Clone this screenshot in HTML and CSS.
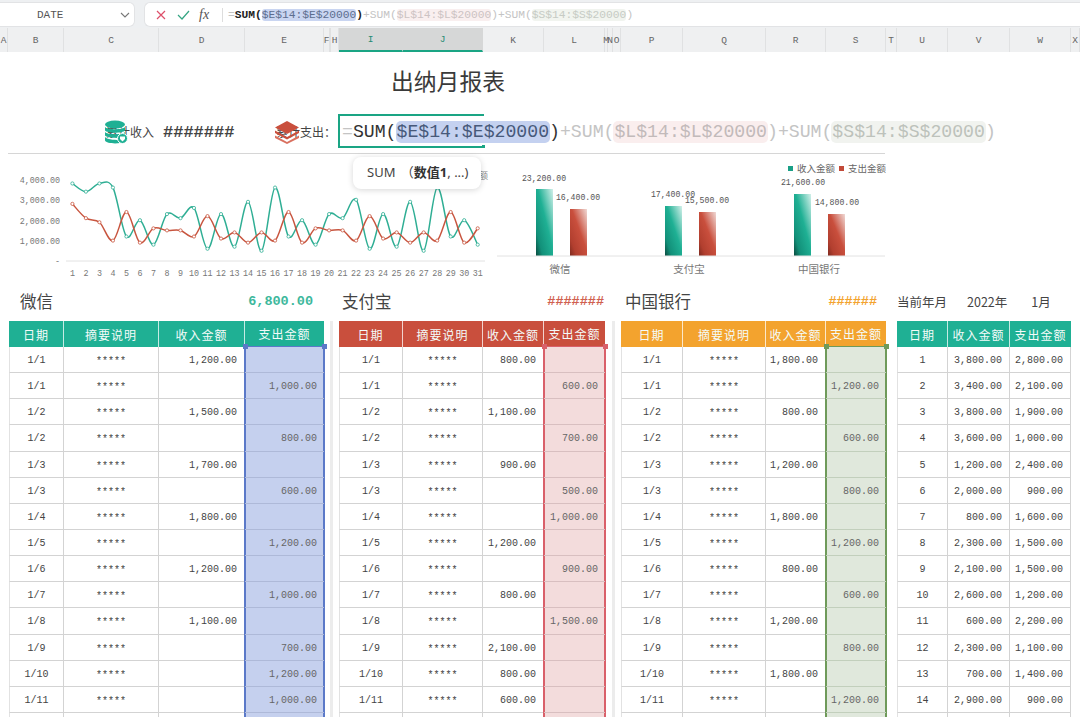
FILE: index.html
```html
<!DOCTYPE html>
<html lang="zh">
<head>
<meta charset="utf-8">
<title>出纳月报表</title>
<link rel="stylesheet" href="styles.css">
</head>
<body>
<header class="toolbar">
  <div class="namebox"><span class="namebox-text">DATE</span>
    <svg class="chevron" viewBox="0 0 10 6" width="10" height="6"><polyline points="1,1 5,5 9,1"/></svg>
  </div>
  <div class="formula">
    <svg class="fx-icon" viewBox="0 0 12 12" width="12" height="12"><path class="cancel" d="M2 2 L10 10 M10 2 L2 10"/></svg>
    <svg class="fx-icon" viewBox="0 0 14 12" width="14" height="12"><polyline class="accept" points="2,6 6,10 13,2"/></svg>
    <span class="fx-label">fx</span>
    <span class="fx-sep"></span>
    <span class="formula-text"><span class="faint">=</span><b>SUM(</b><span class="range-blue">$E$14:$E$20000</span><b>)</b><span class="ghost">+SUM(<span class="range-pink">$L$14:$L$20000</span>)+SUM(<span class="range-green">$S$14:$S$20000</span>)</span></span>
  </div>
</header>

<div class="colhead">
  <span>A</span><span>B</span><span>C</span><span>D</span><span>E</span><span>F</span><span></span><span>H</span>
  <span class="on">I</span><span class="on">J</span><span>K</span><span>L</span><span>M</span><span>N</span><span>O</span>
  <span>P</span><span>Q</span><span>R</span><span>S</span><span>T</span><span>U</span><span>V</span><span>W</span><span>X</span>
</div>

<main class="sheet">
  <h1 class="title">出纳月报表</h1>

  <section class="summary">
    <div class="stat-label stat-income">累计收入
      <svg class="stat-icon" viewBox="0 0 24 24" width="24" height="24">
        <ellipse cx="11" cy="4.5" rx="10" ry="4" fill="#1fb094"/>
        <path d="M1 7 C3 10 19 10 21 7 V10.5 C19 13.5 3 13.5 1 10.5 Z" fill="#1fb094"/>
        <path d="M1 12 C3 15 19 15 21 12 V15.5 C19 18.5 3 18.5 1 15.5 Z" fill="#1fb094"/>
        <path d="M1 17 C3 20 14 20 16 20 V23 C10 24 2 23 1 20.5 Z" fill="#1fb094"/>
        <circle cx="18.5" cy="18.5" r="5" fill="#1fb094" stroke="#fff"/>
        <path d="M16 16.5 H21 V19 L18.5 21.5 L16 19 Z" fill="#fff"/>
      </svg>
    </div>
    <span class="stat-hash">#######</span>
    <div class="stat-label stat-expense">累计支出：
      <svg class="stat-icon" viewBox="0 0 26 24" width="26" height="24">
        <path d="M13 1 L25 7.5 L13 14 L1 7.5 Z" fill="#c94f3d"/>
        <path d="M1 10.5 L13 17 L25 10.5 V13 L13 19.5 L1 13 Z" fill="#c94f3d"/>
        <path d="M1 15.5 L13 22 L25 15.5 V18 L13 24 L1 18 Z" fill="#d9705f"/>
      </svg>
    </div>
    <div class="editor">
      <span class="faint">=</span>SUM(<span class="chip chip-blue">$E$14:$E$20000</span>)<span class="ghost">+SUM(<span class="chip chip-pink">$L$14:$L$20000</span>)+SUM(<span class="chip chip-green">$S$14:$S$20000</span>)</span>
      <i class="editor-handle"></i>
    </div>
    <div class="tip">SUM <span class="tip-args">（<b>数值1</b>, ...)</span></div>
  </section>

  <section class="charts">
    <svg id="lineChart" class="chart" viewBox="0 154 497 136" width="497" height="136">
      <g class="axis-y">
        <text x="60" y="183">4,000.00</text>
        <text x="60" y="203">3,000.00</text>
        <text x="60" y="224">2,000.00</text>
        <text x="60" y="244">1,000.00</text>
        <text x="60" y="264">-</text>
      </g>
      <line class="axis-line" x1="66" y1="261" x2="485" y2="261"/>
      <text class="chart-legend" x="479" y="179">额</text>
    </svg>
    <svg class="chart" viewBox="497 154 389 136" width="389" height="136">
      <defs>
        <linearGradient id="gTeal" x1="1" y1="0" x2="0" y2="1">
          <stop offset="0" stop-color="#d3f0ea"/><stop offset=".45" stop-color="#1fb094"/><stop offset=".8" stop-color="#129079"/><stop offset="1" stop-color="#0a4a3e"/>
        </linearGradient>
        <linearGradient id="gRed" x1="1" y1="0" x2="0" y2="1">
          <stop offset="0" stop-color="#f0dad6"/><stop offset=".45" stop-color="#c94f3d"/><stop offset=".8" stop-color="#b23f2f"/><stop offset="1" stop-color="#7d2a1f"/>
        </linearGradient>
      </defs>
      <rect class="bar-teal" x="536" y="189" width="17" height="67"/>
      <rect class="bar-red" x="570" y="209" width="17" height="47"/>
      <rect class="bar-teal" x="665" y="206" width="17" height="50"/>
      <rect class="bar-red" x="699" y="212" width="17" height="44"/>
      <rect class="bar-teal" x="794" y="194" width="17" height="62"/>
      <rect class="bar-red" x="828" y="214" width="17" height="42"/>
      <line class="axis-line" x1="497" y1="256" x2="885" y2="256"/>
      <g class="bar-value">
        <text x="544" y="181">23,200.00</text>
        <text x="578" y="200">16,400.00</text>
        <text x="673" y="197">17,400.00</text>
        <text x="707" y="203">15,500.00</text>
        <text x="803" y="185">21,600.00</text>
        <text x="837" y="205">14,800.00</text>
      </g>
      <g class="bar-cat">
        <text x="560" y="273">微信</text>
        <text x="689" y="273">支付宝</text>
        <text x="819" y="273">中国银行</text>
      </g>
      <rect x="788" y="166" width="5" height="5" fill="#1a9f86"/>
      <text class="bar-legend" x="797" y="172">收入金额</text>
      <rect x="839" y="166" width="5" height="5" fill="#c24a39"/>
      <text class="bar-legend" x="848" y="172">支出金额</text>
    </svg>
  </section>

  <section class="books">
    <div class="book-head head-wechat"><span class="book-name">微信</span><span class="book-total total-teal">6,800.00</span></div>
    <div></div>
    <div class="book-head head-alipay"><span class="book-name">支付宝</span><span class="book-hash hash-red">#######</span></div>
    <div></div>
    <div class="book-head head-boc"><span class="book-name">中国银行</span><span class="book-hash hash-orange">######</span></div>
    <div></div>
    <div class="period"><span>当前年月</span><span class="period-year">2022年</span><span class="period-month">1月</span></div>

    <table class="ledger wechat">
      <colgroup><col><col><col><col></colgroup>
      <thead><tr><th>日期</th><th>摘要说明</th><th>收入金额</th><th class="hl">支出金额<i class="grip grip-l"></i><i class="grip grip-r"></i></th></tr></thead>
      <tbody>
        <tr><td>1/1</td><td class="memo">*****</td><td class="num">1,200.00</td><td class="num hl"></td></tr>
        <tr><td>1/1</td><td class="memo">*****</td><td class="num"></td><td class="num hl">1,000.00</td></tr>
        <tr><td>1/2</td><td class="memo">*****</td><td class="num">1,500.00</td><td class="num hl"></td></tr>
        <tr><td>1/2</td><td class="memo">*****</td><td class="num"></td><td class="num hl">800.00</td></tr>
        <tr><td>1/3</td><td class="memo">*****</td><td class="num">1,700.00</td><td class="num hl"></td></tr>
        <tr><td>1/3</td><td class="memo">*****</td><td class="num"></td><td class="num hl">600.00</td></tr>
        <tr><td>1/4</td><td class="memo">*****</td><td class="num">1,800.00</td><td class="num hl"></td></tr>
        <tr><td>1/5</td><td class="memo">*****</td><td class="num"></td><td class="num hl">1,200.00</td></tr>
        <tr><td>1/6</td><td class="memo">*****</td><td class="num">1,200.00</td><td class="num hl"></td></tr>
        <tr><td>1/7</td><td class="memo">*****</td><td class="num"></td><td class="num hl">1,000.00</td></tr>
        <tr><td>1/8</td><td class="memo">*****</td><td class="num">1,100.00</td><td class="num hl"></td></tr>
        <tr><td>1/9</td><td class="memo">*****</td><td class="num"></td><td class="num hl">700.00</td></tr>
        <tr><td>1/10</td><td class="memo">*****</td><td class="num"></td><td class="num hl">1,200.00</td></tr>
        <tr><td>1/11</td><td class="memo">*****</td><td class="num"></td><td class="num hl">1,000.00</td></tr>
        <tr><td></td><td></td><td></td><td class="hl"></td></tr>
      </tbody>
    </table>
    <div class="gutter"></div>
    <table class="ledger alipay">
      <colgroup><col><col><col><col></colgroup>
      <thead><tr><th>日期</th><th>摘要说明</th><th>收入金额</th><th class="hl">支出金额<i class="grip grip-l"></i><i class="grip grip-r"></i></th></tr></thead>
      <tbody>
        <tr><td>1/1</td><td class="memo">*****</td><td class="num">800.00</td><td class="num hl"></td></tr>
        <tr><td>1/1</td><td class="memo">*****</td><td class="num"></td><td class="num hl">600.00</td></tr>
        <tr><td>1/2</td><td class="memo">*****</td><td class="num">1,100.00</td><td class="num hl"></td></tr>
        <tr><td>1/2</td><td class="memo">*****</td><td class="num"></td><td class="num hl">700.00</td></tr>
        <tr><td>1/3</td><td class="memo">*****</td><td class="num">900.00</td><td class="num hl"></td></tr>
        <tr><td>1/3</td><td class="memo">*****</td><td class="num"></td><td class="num hl">500.00</td></tr>
        <tr><td>1/4</td><td class="memo">*****</td><td class="num"></td><td class="num hl">1,000.00</td></tr>
        <tr><td>1/5</td><td class="memo">*****</td><td class="num">1,200.00</td><td class="num hl"></td></tr>
        <tr><td>1/6</td><td class="memo">*****</td><td class="num"></td><td class="num hl">900.00</td></tr>
        <tr><td>1/7</td><td class="memo">*****</td><td class="num">800.00</td><td class="num hl"></td></tr>
        <tr><td>1/8</td><td class="memo">*****</td><td class="num"></td><td class="num hl">1,500.00</td></tr>
        <tr><td>1/9</td><td class="memo">*****</td><td class="num">2,100.00</td><td class="num hl"></td></tr>
        <tr><td>1/10</td><td class="memo">*****</td><td class="num">800.00</td><td class="num hl"></td></tr>
        <tr><td>1/11</td><td class="memo">*****</td><td class="num">600.00</td><td class="num hl"></td></tr>
        <tr><td></td><td></td><td></td><td class="hl"></td></tr>
      </tbody>
    </table>
    <div class="gutter"></div>
    <table class="ledger boc">
      <colgroup><col><col><col><col></colgroup>
      <thead><tr><th>日期</th><th>摘要说明</th><th>收入金额</th><th class="hl">支出金额<i class="grip grip-l"></i><i class="grip grip-r"></i></th></tr></thead>
      <tbody>
        <tr><td>1/1</td><td class="memo">*****</td><td class="num">1,800.00</td><td class="num hl"></td></tr>
        <tr><td>1/1</td><td class="memo">*****</td><td class="num"></td><td class="num hl">1,200.00</td></tr>
        <tr><td>1/2</td><td class="memo">*****</td><td class="num">800.00</td><td class="num hl"></td></tr>
        <tr><td>1/2</td><td class="memo">*****</td><td class="num"></td><td class="num hl">600.00</td></tr>
        <tr><td>1/3</td><td class="memo">*****</td><td class="num">1,200.00</td><td class="num hl"></td></tr>
        <tr><td>1/3</td><td class="memo">*****</td><td class="num"></td><td class="num hl">800.00</td></tr>
        <tr><td>1/4</td><td class="memo">*****</td><td class="num">1,800.00</td><td class="num hl"></td></tr>
        <tr><td>1/5</td><td class="memo">*****</td><td class="num"></td><td class="num hl">1,200.00</td></tr>
        <tr><td>1/6</td><td class="memo">*****</td><td class="num">800.00</td><td class="num hl"></td></tr>
        <tr><td>1/7</td><td class="memo">*****</td><td class="num"></td><td class="num hl">600.00</td></tr>
        <tr><td>1/8</td><td class="memo">*****</td><td class="num">1,200.00</td><td class="num hl"></td></tr>
        <tr><td>1/9</td><td class="memo">*****</td><td class="num"></td><td class="num hl">800.00</td></tr>
        <tr><td>1/10</td><td class="memo">*****</td><td class="num">1,800.00</td><td class="num hl"></td></tr>
        <tr><td>1/11</td><td class="memo">*****</td><td class="num"></td><td class="num hl">1,200.00</td></tr>
        <tr><td></td><td></td><td></td><td class="hl"></td></tr>
      </tbody>
    </table>
    <div></div>
    <table class="ledger daily">
      <colgroup><col><col><col></colgroup>
      <thead><tr><th>日期</th><th>收入金额</th><th>支出金额</th></tr></thead>
      <tbody>
        <tr><td>1</td><td class="num">3,800.00</td><td class="num">2,800.00</td></tr>
        <tr><td>2</td><td class="num">3,400.00</td><td class="num">2,100.00</td></tr>
        <tr><td>3</td><td class="num">3,800.00</td><td class="num">1,900.00</td></tr>
        <tr><td>4</td><td class="num">3,600.00</td><td class="num">1,000.00</td></tr>
        <tr><td>5</td><td class="num">1,200.00</td><td class="num">2,400.00</td></tr>
        <tr><td>6</td><td class="num">2,000.00</td><td class="num">900.00</td></tr>
        <tr><td>7</td><td class="num">800.00</td><td class="num">1,600.00</td></tr>
        <tr><td>8</td><td class="num">2,300.00</td><td class="num">1,500.00</td></tr>
        <tr><td>9</td><td class="num">2,100.00</td><td class="num">1,500.00</td></tr>
        <tr><td>10</td><td class="num">2,600.00</td><td class="num">1,200.00</td></tr>
        <tr><td>11</td><td class="num">600.00</td><td class="num">2,200.00</td></tr>
        <tr><td>12</td><td class="num">2,300.00</td><td class="num">1,100.00</td></tr>
        <tr><td>13</td><td class="num">700.00</td><td class="num">1,400.00</td></tr>
        <tr><td>14</td><td class="num">2,900.00</td><td class="num">900.00</td></tr>
        <tr><td></td><td></td><td></td></tr>
      </tbody>
    </table>
  </section>
</main>
<script src="chart.js"></script>
</body>
</html>
```

FILE: styles.css
```css
* { box-sizing: border-box; }
html, body { margin: 0; height: 717px; overflow: hidden; background: #fff; }
body { font-family: "Liberation Mono", "Noto Sans CJK SC", monospace; font-size: 10px; color: #444; }
h1 { margin: 0; }

/* toolbar */
.toolbar { display: flex; height: 28px; padding: 2px 0 1px; gap: 9px; background: #eef0f2; }
.namebox { flex: 0 0 135px; display: flex; align-items: center; justify-content: space-between; padding: 0 4px 0 37px; background: #fff; border-radius: 0 6px 6px 0; border: 1px solid #e2e3e5; border-left: 0; }
.namebox-text { font: 11px "Liberation Mono", monospace; color: #555; }
.chevron polyline { fill: none; stroke: #777; stroke-width: 1.1; }
.formula { flex: 1; display: flex; align-items: center; padding-left: 10px; background: #fff; border-radius: 6px 0 0 6px; border: 1px solid #e2e3e5; border-right: 0; }
.fx-icon { flex: none; margin-right: 9px; }
.cancel { fill: none; stroke: #dd4f6a; stroke-width: 1.2; }
.accept { fill: none; stroke: #35a583; stroke-width: 1.2; }
.fx-label { width: 15px; font: italic 14px "Liberation Serif", serif; color: #555; }
.fx-sep { width: 1px; height: 14px; margin: 0 5px 0 8px; background: #ddd; }
.formula-text { font: 11.25px "Liberation Mono", monospace; white-space: nowrap; color: #222; }
.formula-text b { font-weight: 700; }
.range-blue { color: #5c6d8f; background: #c9d5f1; border-radius: 3px; }
.range-pink { color: #ccc3c3; background: #f9efef; border-radius: 3px; }
.range-green { color: #c6cbc4; background: #f1f4ef; border-radius: 3px; }
.faint { color: #c4c4c4; font-weight: 400; }
.ghost { color: #c4c4c4; font-weight: 400; }

/* column letters */
.colhead { display: grid; height: 24px; grid-template-columns: 8px 56px 95px 86px 79px 6px 1px 8px 64px 80px 61px 61px 3px 5px 8px 62px 83px 60px 60px 11px 51px 62px 61px 9px; background: #eff0f1; }
.colhead span { display: flex; align-items: center; justify-content: center; font-size: 9.5px; color: #666; border-right: 1px solid #e0e1e2; white-space: nowrap; }
.colhead .on { background: #d6d7d7; border-right-color: #d6d7d7; border-bottom: 2px solid #1aa584; color: #1f8a72; }

/* title and totals */
.title { height: 58px; padding: 13px 0 0 391px; font: 400 22.8px/32px "Noto Sans CJK SC", sans-serif; color: #3a3a3a; }
.summary { position: relative; display: flex; align-items: center; height: 44px; margin-left: 8px; width: 877px; padding: 0 0 1px 98px; border-bottom: 1px solid #d6d6d6; }
.stat-label { position: relative; font: 12px "Noto Sans CJK SC", sans-serif; color: #444; white-space: nowrap; }
.stat-income { flex: 0 0 57px; }
.stat-hash { flex: 0 0 111px; padding-top: 3px; font: 700 17px "Liberation Mono", monospace; color: #444; }
.stat-expense { flex: 0 0 64px; padding-left: 2px; }
.stat-icon { position: absolute; top: -3px; left: -2px; }
.stat-expense .stat-icon { left: 0; }
.editor { position: relative; flex: 0 0 146px; min-width: 0; width: 146px; height: 34px; padding: 3px 0 0 2px; font: 18.17px/26px "Liberation Mono", monospace; color: #333; white-space: nowrap; border: 2px solid #1aa584; border-right: 0; }
.chip { display: inline-block; height: 22px; line-height: 22px; padding: 0 1px; margin: 0 -1px; border-radius: 5px; }
.chip-blue { color: #47597a; background: #c4d1f0; }
.chip-pink { color: #c2baba; background: #faeeee; }
.chip-green { color: #bdc2bb; background: #f1f3ef; }
.editor-handle { position: absolute; right: -1px; bottom: -2px; width: 3px; height: 3px; background: #1aa584; }
.tip { position: absolute; z-index: 2; left: 345px; top: 47px; width: 128px; height: 32px; padding-left: 14px; font: 13px/31px "Noto Sans", "Noto Sans CJK SC", sans-serif; color: #444; background: #fff; border-radius: 8px; box-shadow: 0 1px 6px rgba(0, 0, 0, .16); white-space: pre; }
.tip-args { margin-left: 2px; }
.tip b { font-weight: 700; color: #333; }

/* charts */
.charts { display: flex; height: 136px; }
.chart { display: block; flex: none; }
.axis-y text { font-size: 8.4px; fill: #777; text-anchor: end; }
.axis-line { stroke: #e2e2e2; stroke-width: 1; }
.tick { font-size: 8.4px; fill: #777; text-anchor: middle; }
.chart-legend { font: 9px "Noto Sans CJK SC", sans-serif; fill: #888; }
.line { fill: none; stroke-width: 1.5; }
.line-income { stroke: #2fae94; }
.line-expense { stroke: #c8553f; }
.dot { fill: #fff; stroke-width: .8; }
.dot-income { stroke: #2fae94; }
.dot-expense { stroke: #c8553f; }
.bar-teal { fill: url(#gTeal); }
.bar-red { fill: url(#gRed); }
.bar-value text { font-size: 8.2px; fill: #555; text-anchor: middle; }
.bar-cat text { font: 10.5px "Noto Sans CJK SC", sans-serif; fill: #777; text-anchor: middle; }
.bar-legend { font: 9.5px "Noto Sans CJK SC", sans-serif; fill: #666; }

/* ledgers */
.books { display: grid; margin-left: 9px; grid-template-columns: 315px 15px 266px 16px 265px 11px 174px; grid-template-rows: 31px auto; align-items: start; }
.book-head { display: flex; align-items: center; justify-content: space-between; height: 22px; }
.head-wechat { padding: 0 11px; }
.head-alipay { padding: 0 1px 0 3px; }
.head-boc { padding: 0 9px 0 4px; }
.book-name { font: 16.5px "Noto Sans CJK SC", sans-serif; color: #444; }
.book-total { font: 700 13.5px "Liberation Mono", monospace; }
.total-teal { color: #3db89c; }
.book-hash { font: 700 13.5px "Liberation Mono", monospace; }
.hash-red { color: #d0604f; }
.hash-orange { color: #f3a32e; }
.period { display: flex; height: 22px; align-items: center; font: 12.5px "Noto Sans CJK SC", sans-serif; color: #444; }
.period-year { margin-left: 20px; }
.period-month { margin-left: 24px; }
.gutter { align-self: stretch; justify-self: center; width: 3px; height: 400px; background: #ececec; }

.ledger { border-collapse: separate; border-spacing: 0; table-layout: fixed; width: 100%; --head: #1fb094; --edge: #5b79c8; --fill: #c5d0ee; --rule: #aeb9d8; }
.alipay { --head: #c94f3d; --edge: #d9606a; --fill: #f3dcdc; --rule: #d8bfc0; }
.boc { --head: #f3a32e; --edge: #6f9a5a; --fill: #e0e8dc; --rule: #c2cfbc; }
.daily { --head: #1fb094; }
.wechat col:nth-child(1) { width: 55px; }
.wechat col:nth-child(2) { width: 95px; }
.wechat col:nth-child(3) { width: 86px; }
.wechat col:nth-child(4) { width: 79px; }
.alipay col:nth-child(1) { width: 64px; }
.alipay col:nth-child(2) { width: 80px; }
.alipay col:nth-child(3) { width: 61px; }
.alipay col:nth-child(4) { width: 61px; }
.boc col:nth-child(1) { width: 62px; }
.boc col:nth-child(2) { width: 83px; }
.boc col:nth-child(3) { width: 60px; }
.boc col:nth-child(4) { width: 60px; }
.daily col:nth-child(1) { width: 51px; }
.daily col:nth-child(2) { width: 62px; }
.daily col:nth-child(3) { width: 61px; }

.ledger th { position: relative; height: 26px; padding: 0; font: 400 12px "Noto Sans CJK SC", sans-serif; letter-spacing: 1px; color: #f4fbf9; background: var(--head); border-right: 1px solid rgba(255, 255, 255, .75); }
.ledger th:last-child { border-right: 0; }
.ledger th.hl { border-bottom: 1px solid var(--edge); }
.ledger td { height: 26.15px; padding: 2px 0 0; font-size: 10px; text-align: center; color: #444; border-right: 1px solid #d3d3d3; border-bottom: 1px solid #d3d3d3; }
.ledger td:first-child { border-left: 1px solid #e2e2e2; }
.ledger td.memo { padding-top: 4px; }
.ledger td.num { padding-right: 7px; text-align: right; }
.ledger td.hl { color: #666; background: var(--fill); border-right: 0; border-bottom-color: var(--rule); box-shadow: inset 1px 0 var(--edge), inset -1px 0 var(--edge), -1px 0 var(--edge), 1px 0 var(--edge); }
.grip { position: absolute; bottom: -3px; width: 5px; height: 5px; background: var(--edge); }
.grip-l { left: -2px; }
.grip-r { right: -3px; }
```

FILE: chart.js
```js
var income = [3800,3400,3800,3600,1200,2000,800,2300,2100,2600,600,2300,700,2900,500,3600,1200,2000,800,2300,2100,3000,600,2300,700,2900,500,3600,1200,2000,800];
var expense = [2800,2100,1900,1000,2400,900,1600,1500,1500,1200,2200,1100,1400,900,1400,1000,2400,900,1600,1500,1500,1000,2200,1100,1400,900,1400,1000,2400,900,1600];
var svg = document.getElementById('lineChart');
var NS = 'http://www.w3.org/2000/svg';

function add(tag, attrs, text) {
  var el = document.createElementNS(NS, tag);
  for (var k in attrs) el.setAttribute(k, attrs[k]);
  if (text) el.textContent = text;
  svg.insertBefore(el, svg.lastElementChild);
  return el;
}
function px(i) { return 72.4 + i * 13.51; }
function py(v) { return 261 - v * 0.0204; }

function draw(values, name) {
  var pts = values.map(function (v, i) { return [px(i), py(v)]; });
  var d = 'M' + pts[0][0] + ' ' + pts[0][1];
  for (var i = 0; i < pts.length - 1; i++) {
    var p0 = pts[Math.max(i - 1, 0)], p1 = pts[i], p2 = pts[i + 1], p3 = pts[Math.min(i + 2, pts.length - 1)];
    d += 'C' + (p1[0] + (p2[0] - p0[0]) / 6).toFixed(2) + ' ' + (p1[1] + (p2[1] - p0[1]) / 6).toFixed(2) + ' ' +
      (p2[0] - (p3[0] - p1[0]) / 6).toFixed(2) + ' ' + (p2[1] - (p3[1] - p1[1]) / 6).toFixed(2) + ' ' +
      p2[0].toFixed(2) + ' ' + p2[1].toFixed(2);
  }
  add('path', { d: d, 'class': 'line line-' + name });
  pts.forEach(function (p) {
    add('circle', { cx: p[0].toFixed(2), cy: p[1].toFixed(2), r: 1.6, 'class': 'dot dot-' + name });
  });
}
draw(income, 'income');
draw(expense, 'expense');
for (var n = 0; n < 31; n++) add('text', { x: px(n).toFixed(2), y: 276, 'class': 'tick' }, String(n + 1));
```
